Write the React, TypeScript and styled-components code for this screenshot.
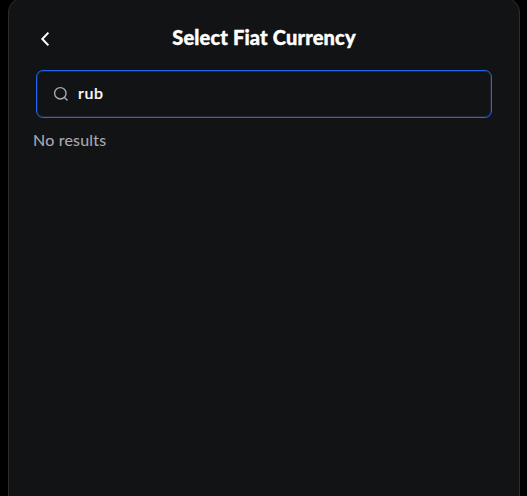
import React, { useState } from "react";
import styled, { createGlobalStyle } from "styled-components";

const GlobalStyle = createGlobalStyle`
  * { box-sizing: border-box; }
  body { margin: 0; background: #000; overflow: hidden; }
`;

const Viewport = styled.div`
  height: 496px;
  overflow: hidden;
  padding: 0 7px 0 8px;
  background: #000;
`;

const Panel = styled.main`
  height: 540px;
  margin-top: -2px;
  padding: 23px 27px 0;
  border: 1px solid #2b2c2e;
  border-radius: 14px;
  background: #121315;
  font-family: Lato, sans-serif;
`;

const Header = styled.header`
  display: grid;
  grid-template-columns: 18px 1fr 18px;
  align-items: center;
  height: 30px;
`;

const BackButton = styled.button`
  display: flex;
  width: 18px;
  height: 18px;
  margin-top: 3px;
  padding: 0;
  border: 0;
  background: none;
  color: #fff;
`;

const Title = styled.h1`
  margin: 0;
  font: 900 20px/30px Lato, sans-serif;
  letter-spacing: 0.17px;
  -webkit-text-stroke: 0.4px #fff;
  text-align: center;
  white-space: nowrap;
  color: #fff;
`;

const SearchField = styled.label`
  display: flex;
  align-items: center;
  gap: 9px;
  height: 48px;
  margin-top: 18px;
  padding: 0 16px;
  border: 1px solid #2463eb;
  border-radius: 7px;
  box-shadow: inset 0 0 0 1px #20263a;
  color: #a8a9b8;
`;

const SearchInput = styled.input`
  flex: 1;
  min-width: 0;
  padding: 0;
  border: 0;
  outline: 0;
  background: none;
  color: #fff;
  font: 500 16px/24px Lato, sans-serif;
  letter-spacing: 0.6px;
  -webkit-text-stroke: 0.2px #fff;
  margin-bottom: 2px;
`;

const EmptyMessage = styled.p`
  margin: 10px 0 0 -3px;
  font-size: 16px;
  line-height: 24px;
  letter-spacing: 0.2px;
  -webkit-text-stroke: 0.1px #a9aab7;
  color: #a9aab7;
`;

export default function App() {
  const [query, setQuery] = useState("rub");
  return (
    <Viewport>
      <GlobalStyle />
      <Panel>
        <Header>
          <BackButton aria-label="Back">
            <svg width="18" height="18" viewBox="0 0 18 18" fill="none" stroke="currentColor" strokeWidth="2">
              <path d="M12.4 2.6 6.3 9l6.1 6.4" />
            </svg>
          </BackButton>
          <Title>Select Fiat Currency</Title>
        </Header>
        <SearchField>
          <svg width="16" height="16" viewBox="0 0 16 16" fill="none" stroke="currentColor" strokeWidth="1.4" strokeLinecap="round">
            <circle cx="7.3" cy="7.3" r="5.7" />
            <path d="m11.4 11.4 2.7 2.7" />
          </svg>
          <SearchInput value={query} onChange={(e) => setQuery(e.target.value)} aria-label="Search currency" />
        </SearchField>
        <EmptyMessage>No results</EmptyMessage>
      </Panel>
    </Viewport>
  );
}
